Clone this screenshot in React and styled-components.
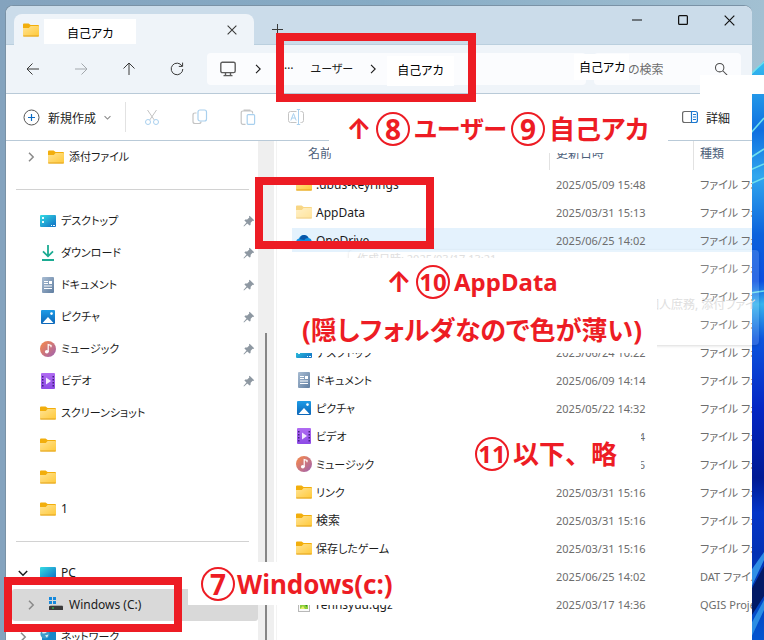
import React from 'react'
import styled, { createGlobalStyle } from 'styled-components'

const ink = '#1b1b1b'
const muted = '#6d6d6d'
const line = '#b9cad8'
const marker = '#ed1c24'
const sans = `'Noto Sans', 'Noto Sans CJK JP', sans-serif`

const GlobalStyle = createGlobalStyle`
  * {
    box-sizing: border-box;
  }
  body {
    margin: 0;
    background: #86a7c1;
    color: ${ink};
    font-family: ${sans};
    font-size: 12px;
    line-height: 16px;
    font-feature-settings: 'palt';
  }
  button, input {
    font: inherit;
    font-feature-settings: inherit;
    color: inherit;
    border: 0;
    padding: 0;
    background: none;
  }
  svg {
    display: block;
    flex: none;
  }
`

const Desktop = styled.div`
  position: relative;
  height: 100vh;
  overflow: hidden;
  background: linear-gradient(90deg, #84a3be 0%, #86abc5 50%, #a2c0d2 100%);
`

const Wallpaper = styled.svg`
  position: absolute;
  top: 0;
  right: 0;
`

const Window = styled.main`
  position: relative;
  height: 100%;
  margin: 5px 12px 0 5px;
  display: flex;
  flex-direction: column;
  background: #fff;
  border: 1px solid #7a92a6;
  border-right-width: 0;
  border-radius: 8px 8px 0 0;
  overflow: hidden;
`

const TabStrip = styled.header`
  display: flex;
  height: 39px;
  flex: none;
  padding-left: 8px;
  background: #cbdcea;
  box-shadow: inset 0 -1px 0 #bacfde;
`

const Tab = styled.div`
  display: flex;
  align-items: center;
  width: 240px;
  margin-top: 8px;
  padding: 0 14px 0 9px;
  background: #eff4f9;
  border-radius: 8px 8px 0 0;
`

const TabName = styled.span`
  width: 92px;
  height: 25px;
  margin: 4px auto 0 5px;
  padding: 7px 0 0 23px;
  background: #fff;
  color: #000;
`

const IconButton = styled.button`
  display: flex;
  align-items: center;
  justify-content: center;
  width: ${p => p.$w || 48}px;
  height: ${p => p.$h || 32}px;
  color: ${p => p.$color || '#3a3a3a'};
`

const WindowButtons = styled.div`
  display: flex;
  margin-left: auto;
`

const NavBar = styled.nav`
  display: flex;
  align-items: center;
  gap: 8px;
  height: 49px;
  flex: none;
  padding: 0 11px 0 3px;
  background: #eff4f9;
  border-bottom: 1px solid ${line};
`

const NavButtons = styled.div`
  display: flex;
  margin-right: -2px;
`

const AddressBar = styled.div`
  display: flex;
  align-items: center;
  flex: 1;
  height: 32px;
  padding-left: 13px;
  background: #fbfcfe;
  border-radius: 4px;
`

const Crumb = styled.a`
  color: ${ink};
  font-size: ${p => (p.$kana ? 11 : 12)}px;
  text-decoration: none;
  margin: ${p => p.$margin || 0};
`

const CurrentCrumb = styled(Crumb)`
  height: 30px;
  padding: 7px 10px;
  margin: 3px 0 0 9px;
  background: #fff;
  color: #000;
`

const SearchBox = styled.label`
  position: relative;
  display: flex;
  align-items: center;
  width: 147px;
  height: 32px;
  padding-right: 13px;
  background: #fbfcfe;
  border-radius: 4px;

  input {
    flex: 1;
    width: 20px;
    padding: 2px 0 0 34px;
  }
  input::placeholder {
    color: ${muted};
    opacity: 1;
  }
`

const SearchName = styled.span`
  position: absolute;
  left: -20px;
  top: 1px;
  width: 55px;
  height: 26px;
  padding: 6px 0 0 5px;
  background: #fff;
  color: #000;
`

const CommandBar = styled.div`
  display: flex;
  align-items: center;
  height: 47px;
  flex: none;
  padding: 0 22px 0 17px;
  border-bottom: 1px solid ${line};
`

const Command = styled.button`
  display: flex;
  align-items: center;
  gap: 8px;
  height: 32px;

  span {
    padding-top: 3px;
  }
`

const NewCommand = styled(Command)`
  width: 102px;
`

const CommandGroup = styled.div`
  display: flex;
  height: 30px;
  margin-right: auto;
  padding-left: 2px;
  border-left: 1px solid #e2e2e2;
`

const Body = styled.div`
  display: flex;
  flex: 1;
  min-height: 0;
`

const Sidebar = styled.ul`
  width: 252px;
  flex: none;
  margin: 0;
  padding: 0;
  list-style: none;
`

const Rule = styled.li`
  height: 32px;
  padding: 16px 9px 0 10px;

  hr {
    margin: 0;
    border: 0;
    border-top: 1px solid #d2d2d2;
  }
`

const Place = styled.a`
  display: flex;
  align-items: center;
  gap: 5px;
  height: 32px;
  margin-left: 6px;
  padding: 0 3px 0 ${p => (p.$nested ? 14 : 6)}px;
  background: ${p => (p.$selected ? '#d9d9d9' : 'transparent')};
  border-radius: 3px;
  color: ${ink};
  font-size: ${p => (p.$kana ? 11 : 12)}px;
  text-decoration: none;
`

const PinSlot = styled.i`
  margin-left: auto;
`

const Caret = styled.span`
  display: flex;
  justify-content: center;
  width: 10px;
  margin-right: 7px;
`

const ScrollTrack = styled.div`
  width: 16px;
  flex: none;
  padding: 192px 6px 0 7px;
  background: #efefef;

  &::before {
    content: '';
    display: block;
    width: 2px;
    height: 100%;
    background: #868686;
  }
`

const Files = styled.section`
  flex: 1;
  min-width: 0;
  margin-left: 2px;
  padding-left: 15px;
  border-left: 1px solid #f3f3f3;
  overflow: hidden;
`

const FileTable = styled.table`
  width: 100%;
  table-layout: fixed;
  border-collapse: separate;
  border-spacing: 0;

  th {
    height: 29px;
    padding: 0 0 3px 6px;
    border-left: 1px solid #e2e2e2;
    color: #4c607a;
    font-weight: 400;
    text-align: left;
  }
  th:first-child {
    padding-left: 16px;
    border-left: 0;
  }
  th:nth-child(2) {
    width: 144px;
  }
  th:nth-child(3) {
    width: 59px;
  }
  td {
    height: 28px;
    padding: 2px 0 0 7px;
    border: 2px solid transparent;
    border-width: 2px 0;
    background-clip: padding-box;
    color: ${muted};
    font-size: 11px;
    white-space: nowrap;
    overflow: hidden;
  }
  td:first-child {
    padding: 0 0 0 4px;
    color: ${ink};
  }
`

const FileRow = styled.tr`
  td {
    background-color: ${p => (p.$hover ? '#e4f2fd' : 'transparent')};
  }
`

const FileName = styled.span`
  display: flex;
  align-items: center;
  gap: 4px;
  font-size: ${p => (p.$kana ? 11 : 12)}px;

  span {
    padding-top: 2px;
  }
`

const Stamp = styled.time`
  display: block;
  width: 89px;
  text-align: right;
`

/* things lying over the window */
const Overlay = styled.div`
  position: absolute;
  left: ${p => p.$x}px;
  top: ${p => p.$y}px;
  width: ${p => p.$w}px;
  height: ${p => p.$h}px;
`

const Frame = styled(Overlay)`
  border: 8px solid ${marker};
`

const Tooltip = styled(Overlay)`
  padding: 1px 8px;
  background: rgba(255, 255, 255, 0.15);
  border-radius: 4px;
  box-shadow: 0 1px 3px rgba(0, 0, 0, 0.15);
  color: #dedede;
  font-size: 11px;
  white-space: nowrap;
  overflow: hidden;

  p {
    margin: 0 0 30px;
  }
  p + p {
    padding-left: 290px;
    font-size: 12px;
  }
`

const Note = styled(Overlay)`
  display: flex;
  align-items: center;
  gap: ${p => (p.$tight ? 2 : 4)}px;
  padding-left: ${p => p.$pad || 0}px;
  background: #fff;
  color: ${marker};
  font-size: 26px;
  line-height: 34px;
  font-weight: 700;
  font-feature-settings: ${p => (p.$wide ? 'normal' : `'palt'`)};
  white-space: nowrap;
`

const Small = styled.span`
  font-size: 24px;
`

const Arrow = styled.span`
  display: flex;
  justify-content: center;
  width: 26px;
  font-family: Inter, sans-serif;
  font-size: 28px;
`

const Ring = styled.span`
  display: flex;
  align-items: center;
  justify-content: center;
  width: 34px;
  height: 34px;
  border: 2px solid ${marker};
  border-radius: 50%;
  font-size: ${p => (p.$two ? 24 : 28)}px;
`

const Folder = ({ pale }) => (
  <svg width="16" height="16" viewBox="0 0 16 16" opacity={pale ? 0.5 : 1}>
    <defs>
      <linearGradient id="folder" x1="0" y1="0" x2="1" y2="1">
        <stop offset="0" stopColor="#ffe394" />
        <stop offset="1" stopColor="#ffc938" />
      </linearGradient>
    </defs>
    <path d="M0 2.6Q0 1.5 1 1.5H5.6L7.6 3H15Q16 3 16 4V6H0Z" fill="#f2ae0c" />
    <path d="M0 6H5.8L7.6 4H15.2Q16 4 16 5V13.4Q16 14.5 15 14.5H1Q0 14.5 0 13.4Z" fill="url(#folder)" />
    <path d="M.3 14H15.7" stroke="#e2a21c" />
  </svg>
)

const DesktopIcon = ({ plain }) => (
  <svg width="16" height="16" viewBox="0 0 16 16">
    <defs>
      <linearGradient id="desk" x1="0" y1="0" x2="1" y2="1">
        <stop offset="0" stopColor="#35dde4" />
        <stop offset="1" stopColor="#0f6cc4" />
      </linearGradient>
    </defs>
    <rect y="2" width="16" height="12" rx="1" fill="url(#desk)" />
    {!plain && (
      <path d="M2 4h2v2H2zM2 8h2v2H2zM11 12h1v1h-1zM13 12h2v1h-2z" fill="#e9fbff" />
    )}
    {plain && <path d="M0 13.5h16" stroke="#0b5a9d" />}
  </svg>
)

const DownloadIcon = () => (
  <svg width="16" height="16" viewBox="0 0 16 16" fill="none" stroke="#1cab92" strokeWidth="1.8">
    <path d="M8 0V11M3 6.3L8 11.3L13 6.3M2 15H14" />
  </svg>
)

const DocumentIcon = () => (
  <svg width="16" height="16" viewBox="0 0 16 16">
    <defs>
      <linearGradient id="doc" x1="0" y1="0" x2="1" y2="1">
        <stop offset="0" stopColor="#a9bdd3" />
        <stop offset="1" stopColor="#5f7da0" />
      </linearGradient>
    </defs>
    <rect x="2" width="12" height="16" rx="1" fill="url(#doc)" />
    <path d="M4 4h4v1H4zM4 6h4v1H4zM9 4h3v3H9zM4 8.5h8v1H4zM4 11h8v1H4z" fill="#fff" />
  </svg>
)

const PictureIcon = () => (
  <svg width="16" height="16" viewBox="0 0 16 16">
    <defs>
      <linearGradient id="pic" x1="0" y1="0" x2="0" y2="1">
        <stop offset="0" stopColor="#1d9be6" />
        <stop offset="1" stopColor="#0c66b8" />
      </linearGradient>
    </defs>
    <rect x="1" y="1" width="14" height="14" rx="1" fill="url(#pic)" />
    <path d="M2.5 14L8 8L13.5 14Z" fill="#fff" />
    <circle cx="11.5" cy="4.6" r="1.3" fill="#fff" />
  </svg>
)

const MusicIcon = () => (
  <svg width="16" height="16" viewBox="0 0 16 16">
    <defs>
      <linearGradient id="music" x1="0" y1="0" x2="1" y2="1">
        <stop offset=".2" stopColor="#e9835a" />
        <stop offset="1" stopColor="#9d60b4" />
      </linearGradient>
    </defs>
    <circle cx="8" cy="8" r="8" fill="url(#music)" />
    <ellipse cx="6.8" cy="10.8" rx="1.9" ry="1.7" fill="#fff" />
    <path d="M8.2 11V3.5L11 4.5V6.3" fill="none" stroke="#fff" strokeWidth="1.2" />
  </svg>
)

const VideoIcon = () => (
  <svg width="16" height="16" viewBox="0 0 16 16">
    <defs>
      <linearGradient id="video" x1="0" y1="0" x2="0" y2="1">
        <stop offset="0" stopColor="#b06bf2" />
        <stop offset="1" stopColor="#8d4be6" />
      </linearGradient>
    </defs>
    <rect x="1" width="14" height="16" rx="1" fill="url(#video)" />
    <path d="M2 3h1.5v1.5H2zM2 6h1.5v1.5H2zM2 9h1.5v1.5H2zM2 12h1.5v1.5H2zM12.5 3H14v1.5h-1.5zM12.5 6H14v1.5h-1.5zM12.5 9H14v1.5h-1.5zM12.5 12H14v1.5h-1.5z" fill="#42207e" />
    <path d="M6 4.5L11 8L6 11.5Z" fill="#f3eaff" />
  </svg>
)

const OneDriveIcon = () => (
  <svg width="16" height="16" viewBox="0 0 16 16">
    <path d="M3.5 13.5A3.5 3.5 0 0 1 3 6.6A5.2 5.2 0 0 1 12.6 6A3.8 3.8 0 0 1 12.4 13.5Z" fill="#1490df" />
    <path d="M3.5 7.2Q5 2.6 8.6 2.9Q11.6 3.2 12.6 6Q9.5 5.6 8.4 8Z" fill="#0a56a8" />
  </svg>
)

const DriveIcon = () => (
  <svg width="16" height="16" viewBox="0 0 16 16">
    <path d="M1 0h3v3H1zM5 0h3v3H5zM1 4h3v3H1zM5 4h3v3H5z" fill="#1689dc" />
    <path d="M2.5 8H14L15.5 9.5H1.5Z" fill="#a7a7a7" />
    <rect x="1" y="9" width="14" height="4" rx=".6" fill="#3a3a3a" />
    <rect x="4" y="10.5" width="2" height="1" fill="#3dde57" />
  </svg>
)

const NetworkIcon = () => (
  <svg width="16" height="16" viewBox="0 0 16 16">
    <rect x="2" y="2" width="14" height="12" rx="1" fill="#1787c9" />
    <circle cx="5" cy="5" r="4.6" fill="#3f9bc9" />
    <path d="M2 2.5Q5 1 7 3Q5 5 2.5 4.5ZM5 6.5L8.5 5.5L7 8.8Z" fill="#d8f0f8" />
  </svg>
)

const QgisIcon = () => (
  <svg width="16" height="16" viewBox="0 0 16 16">
    <rect x="2.5" y=".5" width="11" height="15" fill="#fafafa" stroke="#b8b8b8" />
    <path d="M4 5h8v8H4z" fill="#8cce3c" />
    <path d="M6 6h5v5Z" fill="#2f8a2b" />
    <path d="M4 13l3-3 2 3z" fill="#e5ef6a" />
  </svg>
)

const Pin = () => (
  <svg width="12" height="12" viewBox="0 0 12 12">
    <path d="M6.6 .8L11.2 5.2L10.2 6L9.6 5.8L7.7 7.8L7.5 10L6.6 10.6L4.3 8.4L1 11.4L.5 11L3.5 7.6L1.4 5.4L2.2 4.5L4.2 4.4L6.3 2.4L6 1.5Z" fill="#8e98a2" />
  </svg>
)

const Chevron = ({ dir = 'right', size = 10, color = ink, width = 1.1 }) => (
  <svg width={size} height={size} viewBox="0 0 10 10" fill="none" stroke={color} strokeWidth={width}>
    <path d={dir === 'right' ? 'M3 .8L7.2 5L3 9.2' : 'M.8 3L5 7.2L9.2 3'} />
  </svg>
)

const Glyph = ({ d, size = 16, children, color = 'currentColor', width = 1 }) => (
  <svg width={size} height={size} viewBox="0 0 16 16" fill="none" stroke={color} strokeWidth={width}>
    {d && <path d={d} />}
    {children}
  </svg>
)

const icons = {
  folder: <Folder />,
  pale: <Folder pale />,
  desktop: <DesktopIcon />,
  download: <DownloadIcon />,
  document: <DocumentIcon />,
  picture: <PictureIcon />,
  music: <MusicIcon />,
  video: <VideoIcon />,
  onedrive: <OneDriveIcon />,
  qgis: <QgisIcon />,
}

const pinned = [
  ['desktop', 'デスクトップ', true],
  ['download', 'ダウンロード', true],
  ['document', 'ドキュメント', true],
  ['picture', 'ピクチャ', true],
  ['music', 'ミュージック', true],
  ['video', 'ビデオ', true],
  ['folder', 'スクリーンショット'],
  ['folder', ''],
  ['folder', ''],
  ['folder', '1'],
]

const folderType = 'ファイル フォ'

const files = [
  ['folder', '.dbus-keyrings', '2025/05/09 15:48', folderType],
  ['pale', 'AppData', '2025/03/31 15:13', folderType],
  ['onedrive', 'OneDrive', '2025/06/25 14:02', folderType],
  [null, '', '', folderType],
  [null, '', '', folderType],
  [null, '', '', folderType],
  ['desktop', 'デスクトップ', '2025/06/24 10:22', folderType],
  ['document', 'ドキュメント', '2025/06/09 14:14', folderType],
  ['picture', 'ピクチャ', '2025/05/22 14:32', folderType],
  ['video', 'ビデオ', '4', folderType],
  ['music', 'ミュージック', '6', folderType],
  ['folder', 'リンク', '2025/03/31 15:16', folderType],
  ['folder', '検索', '2025/03/31 15:16', folderType],
  ['folder', '保存したゲーム', '2025/03/31 15:16', folderType],
  [null, '', '2025/06/25 14:02', 'DAT ファイル'],
  ['qgis', 'rennsyuu.qgz', '2025/03/17 14:36', 'QGIS Project'],
]

const hasKana = name => /[ァ-ヶ]/.test(name)

const Bloom = () => (
  <Wallpaper width="14" height="640" viewBox="0 0 14 640">
    <defs>
      <linearGradient id="bloom" x1="0" y1="0" x2="0" y2="1">
        <stop offset="0" stopColor="#36bdf0" />
        <stop offset=".12" stopColor="#0f6fe0" />
        <stop offset=".2" stopColor="#31a7ee" />
        <stop offset=".3" stopColor="#0b62dc" />
        <stop offset=".38" stopColor="#0a4fe0" />
        <stop offset=".42" stopColor="#36b4ee" />
        <stop offset=".48" stopColor="#0c55dd" />
        <stop offset=".6" stopColor="#0426c4" />
        <stop offset=".72" stopColor="#001a94" />
        <stop offset=".78" stopColor="#0436c8" />
        <stop offset=".85" stopColor="#0231b4" />
        <stop offset="1" stopColor="#0355cf" />
      </linearGradient>
    </defs>
    <path d="M0 76Q8 67 14 61V640H0Z" fill="url(#bloom)" />
    <path d="M0 75Q8 67 14 62M0 134L14 118M0 158L14 149M0 170L14 164M0 184L14 178M0 293L14 291" fill="none" stroke="#6fe0ee" strokeWidth="1.5" />
    <path d="M0 572L14 552V560L0 590Z" fill="#2f8fe6" />
    <path d="M0 592L14 566V596L0 618Z" fill="#021a66" />
    <path d="M0 626L14 600V610L0 640Z" fill="#2a8de4" />
  </Wallpaper>
)

const App = () => (
  <>
    <GlobalStyle />
    <Desktop>
      <Bloom />
      <Window>
        <TabStrip>
          <Tab>
            <Folder />
            <TabName>自己アカ</TabName>
            <IconButton $w={16} $h={16} aria-label="close tab">
              <Glyph size={10} width={1.7} d="M1 1L15 15M15 1L1 15" />
            </IconButton>
          </Tab>
          <IconButton $w={46} $h={46} aria-label="new tab">
            <Glyph size={11} width={1.5} d="M8 0V16M0 8H16" />
          </IconButton>
          <WindowButtons>
            <IconButton $w={46} $h={28} $color="#111" aria-label="minimize">
              <Glyph size={10} width={1.6} d="M0 8H16" />
            </IconButton>
            <IconButton $w={46} $h={28} $color="#111" aria-label="maximize">
              <Glyph size={10} width={2}>
                <rect x="1" y="1" width="14" height="14" rx="1.5" />
              </Glyph>
            </IconButton>
            <IconButton $w={46} $h={28} $color="#111" aria-label="close">
              <Glyph size={11} width={1.7} d="M1 1L15 15M15 1L1 15" />
            </IconButton>
          </WindowButtons>
        </TabStrip>

        <NavBar>
          <NavButtons>
            <IconButton aria-label="back">
              <Glyph d="M14 8H2.2M7.5 2.5L2 8L7.5 13.5" />
            </IconButton>
            <IconButton aria-label="forward" $color="#a3a8ad">
              <Glyph d="M2 8H13.8M8.5 2.5L14 8L8.5 13.5" />
            </IconButton>
            <IconButton aria-label="up">
              <Glyph d="M8 14V2.2M2.5 7.5L8 2L13.5 7.5" />
            </IconButton>
            <IconButton aria-label="refresh">
              <Glyph d="M13 5A5.8 5.8 0 1 0 13.8 8M13.6 1.6V5.4H9.8" />
            </IconButton>
          </NavButtons>
          <AddressBar>
            <Glyph color="#5c5c5c" width={1.4}>
              <rect x=".8" y="1.2" width="14.4" height="10.4" rx="1.6" />
              <path d="M5.5 12V14M10.5 12V14M3.5 14.6H12.5" />
            </Glyph>
            <Crumb as="span" $margin="0 0 0 17px">
              <Chevron />
            </Crumb>
            <Crumb href="#more" $margin="0 0 8px 21px" aria-label="more">
              …
            </Crumb>
            <Crumb href="#users" $kana $margin="0 15px 0 17px">
              ユーザー
            </Crumb>
            <Chevron />
            <CurrentCrumb href="#me">自己アカ</CurrentCrumb>
          </AddressBar>
          <SearchBox>
            <input type="text" placeholder="の検索" aria-label="検索" />
            <SearchName>自己アカ</SearchName>
            <Glyph size={14} color="#4c4c4c" width={1.2}>
              <circle cx="6.5" cy="6.5" r="4.8" />
              <path d="M10 10L15 15" />
            </Glyph>
          </SearchBox>
        </NavBar>

        <CommandBar>
          <NewCommand>
            <svg width="17" height="17" viewBox="0 0 17 17" fill="none">
              <circle cx="8.5" cy="8.5" r="7.5" stroke="#555" />
              <path d="M8.5 5V12M5 8.5H12" stroke="#0c6cc4" strokeWidth="1.2" />
            </svg>
            <span>新規作成</span>
            <Chevron dir="down" size={7} color="#8a8a8a" width={1.6} />
          </NewCommand>
          <CommandGroup>
            <IconButton aria-label="cut" $h={30}>
              <Glyph color="#a9d0ee">
                <path d="M3.5 1L10.3 11M12.5 1L5.7 11" stroke="#c4c4c4" />
                <circle cx="4" cy="13" r="2.5" />
                <circle cx="12" cy="13" r="2.5" />
              </Glyph>
            </IconButton>
            <IconButton aria-label="copy" $h={30}>
              <Glyph color="#a9d0ee" width={1.2}>
                <path d="M4.5 4H3Q1 4 1 6V12.5Q1 14.5 3 14.5H7Q9 14.5 9 12.5" stroke="#c4c4c4" />
                <rect x="6" y="1" width="8.5" height="11" rx="2" />
              </Glyph>
            </IconButton>
            <IconButton aria-label="paste" $h={30}>
              <Glyph color="#a9d0ee" width={1.2}>
                <path d="M5.5 15.3H3Q1.2 15.3 1.2 13.5V3.7Q1.2 2 3 2H11Q12.6 2 12.6 3.7V4.5M4.2 2.2V1H9.8V2.2" stroke="#c4c4c4" />
                <rect x="7.2" y="5.6" width="7.4" height="9.7" rx="1" />
              </Glyph>
            </IconButton>
            <IconButton aria-label="rename" $h={30}>
              <Glyph color="#a9d0ee">
                <path d="M8.5 2.5H2.5Q.5 2.5 .5 4.5V11.5Q.5 13.5 2.5 13.5H8.5M12.5 2.5H13.5Q15.5 2.5 15.5 4.5V11.5Q15.5 13.5 13.5 13.5H12.5" stroke="#c4c4c4" />
                <path d="M2.8 11.5L5.5 4.5L8.2 11.5M3.8 9H7.2M10.5 .5V15.5M8.8 .5H12.2M8.8 15.5H12.2" />
              </Glyph>
            </IconButton>
          </CommandGroup>
          <Command>
            <Glyph width={1.2}>
              <path d="M9 2.5H2.6Q.6 2.5 .6 4.5V11.5Q.6 13.5 2.6 13.5H9" stroke="#6a6a6a" />
              <path d="M9.5 2.5H13.4Q15.4 2.5 15.4 4.5V11.5Q15.4 13.5 13.4 13.5H9.5ZM11 5.5H14M11 8H14M11 10.5H14" stroke="#1b78d0" />
            </Glyph>
            <span>詳細</span>
          </Command>
        </CommandBar>

        <Body>
          <Sidebar>
            <li>
              <Place href="#attach" $nested $kana>
                <Caret>
                  <Chevron color="#8a8a8a" width={1.5} />
                </Caret>
                <Folder />
                <span>添付ファイル</span>
              </Place>
            </li>
            <Rule>
              <hr />
            </Rule>
            {pinned.map(([icon, name, pin], i) => (
              <li key={i}>
                <Place href="#place" $kana={hasKana(name)}>
                  <Caret />
                  {icons[icon]}
                  <span>{name}</span>
                  {pin && (
                    <PinSlot>
                      <Pin />
                    </PinSlot>
                  )}
                </Place>
              </li>
            ))}
            <Rule>
              <hr />
            </Rule>
            <li>
              <Place href="#pc">
                <Caret>
                  <Chevron dir="down" width={1.5} />
                </Caret>
                <DesktopIcon plain />
                <span>PC</span>
              </Place>
            </li>
            <li>
              <Place href="#c" $nested $selected>
                <Caret>
                  <Chevron color="#8a8a8a" width={1.5} />
                </Caret>
                <DriveIcon />
                <span>Windows (C:)</span>
              </Place>
            </li>
            <li>
              <Place href="#network" $kana>
                <Caret>
                  <Chevron color="#8a8a8a" width={1.5} />
                </Caret>
                <NetworkIcon />
                <span>ネットワーク</span>
              </Place>
            </li>
          </Sidebar>
          <ScrollTrack />
          <Files>
            <FileTable>
              <thead>
                <tr>
                  <th>名前</th>
                  <th>更新日時</th>
                  <th>種類</th>
                </tr>
              </thead>
              <tbody>
                {files.map(([icon, name, date, type], i) => (
                  <FileRow key={i} $hover={name === 'OneDrive'}>
                    <td>
                      <FileName $kana={hasKana(name)}>
                        {icons[icon]}
                        <span>{name}</span>
                      </FileName>
                    </td>
                    <td>
                      <Stamp>{date}</Stamp>
                    </td>
                    <td>{type}</td>
                  </FileRow>
                ))}
              </tbody>
            </FileTable>
          </Files>
        </Body>
      </Window>

      <Tooltip $x={349} $y={250} $w={410} $h={95}>
        <p>作成日時: 2025/03/17 13:21</p>
        <p>個人庶務, 添付ファイ</p>
      </Tooltip>

      <Note $x={700} $y={75} $w={64} $h={19} />
      <Note $x={329} $y={105} $w={339} $h={48} $pad={17}>
        <Arrow>↑</Arrow>
        <Ring>8</Ring>
        <Small>ユーザー</Small>
        <Ring>9</Ring>
        <span>自己アカ</span>
      </Note>
      <Note $x={285} $y={258} $w={372} $h={48} $pad={101}>
        <Arrow>↑</Arrow>
        <Ring $two>10</Ring>
        <Small>AppData</Small>
      </Note>
      <Note $x={285} $y={306} $w={372} $h={47} $pad={17}>
        (隠しフォルダなので色が薄い)
      </Note>
      <Note $x={460} $y={422} $w={181} $h={64} $pad={15} $wide>
        <Ring $two>11</Ring>
        <span>以下、略</span>
      </Note>
      <Note $x={188} $y={562} $w={210} $h={43} $pad={13} $tight>
        <Ring>7</Ring>
        <span>Windows(c:)</span>
      </Note>

      <Frame $x={276} $y={33} $w={200} $h={69} />
      <Frame $x={255} $y={177} $w={179} $h={72} />
      <Frame $x={4} $y={577} $w={178} $h={55} />
    </Desktop>
  </>
)

export default App
